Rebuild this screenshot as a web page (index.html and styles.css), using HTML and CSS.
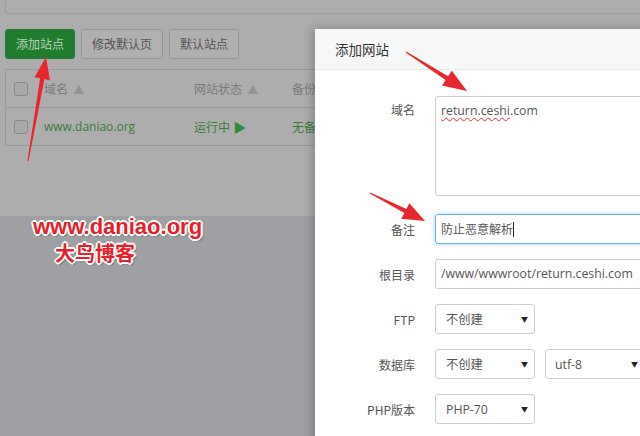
FILE: index.html
```html
<!DOCTYPE html>
<html lang="zh-CN">
<head>
<meta charset="utf-8">
<title>添加网站</title>
<link rel="stylesheet" href="styles.css">
</head>
<body>
<div class="page">
  <div class="top">
    <div class="card-top"></div>
    <div class="toolbar">
      <button class="btn btn-green">添加站点</button>
      <button class="btn">修改默认页</button>
      <button class="btn">默认站点</button>
    </div>
    <table class="sites">
      <tr class="head">
        <td class="c-check"><span class="check"></span></td>
        <td class="c-name">域名 <span class="sort">▲</span></td>
        <td class="c-status">网站状态 <span class="sort">▲</span></td>
        <td class="c-backup">备份</td>
      </tr>
      <tr>
        <td class="c-check"><span class="check"></span></td>
        <td class="c-name link">www.daniao.org</td>
        <td class="c-status link">运行中 <span class="play">▶</span></td>
        <td class="c-backup link">无备份</td>
      </tr>
    </table>
  </div>
  <div class="bottom"></div>
</div>

<div class="modal">
  <div class="modal-head">添加网站</div>
  <div class="form">
    <label class="lbl lbl-top">域名</label>
    <div class="field area"><span class="typo">return.ceshi</span>.com</div>

    <label class="lbl">备注</label>
    <div class="field focus">防止恶意解析<span class="caret"></span></div>

    <label class="lbl">根目录</label>
    <div class="field">/www/wwwroot/return.ceshi.com</div>

    <label class="lbl">FTP</label>
    <div class="selects"><div class="select">不创建<span class="arr">▼</span></div></div>

    <label class="lbl">数据库</label>
    <div class="selects">
      <div class="select">不创建<span class="arr">▼</span></div>
      <div class="select select-utf">utf-8<span class="arr">▼</span></div>
    </div>

    <label class="lbl">PHP版本</label>
    <div class="selects"><div class="select">PHP-70<span class="arr">▼</span></div></div>
  </div>
</div>

<div class="mark">
  <div class="mark-url">www.daniao.org</div>
  <div class="mark-cn">大鸟博客</div>
</div>

<svg class="arrows" width="640" height="436" viewBox="0 0 640 436">
  <polygon points="46,57 50,80.5 44.4,79 28.6,161 27.4,161 40.1,78.3 34.5,77.2" fill="#e8262b"/>
  <polygon points="467,91 442,85.5 445.6,79.9 405.7,52.4 406.3,51.6 448,76.3 451.8,70.8" fill="#e8262b"/>
  <polygon points="425,221 401.3,218.8 404.4,212.9 369.8,193.4 370.2,192.6 406.4,209.1 409.3,203.3" fill="#e8262b"/>
</svg>
</body>
</html>
```
FILE: styles.css
```css
html, body {
  margin: 0;
  padding: 0;
  width: 640px;
  height: 436px;
  overflow: hidden;
  font-family: "Open Sans", "Noto Sans CJK SC", sans-serif;
}

.page {
  display: flex;
  flex-direction: column;
  height: 436px;
}

.top {
  height: 216px;
  background: #adadad;
  padding-left: 5px;
  box-sizing: border-box;
}

.card-top {
  height: 14px;
  box-sizing: border-box;
  border-left: 1px solid #9c9c9c;
  border-bottom: 1px solid #9c9c9c;
  border-bottom-left-radius: 4px;
}

.toolbar {
  display: flex;
  gap: 6px;
  margin-top: 15px;
}

.btn {
  height: 30px;
  padding: 0 10px;
  border: 1px solid #949494;
  border-radius: 3px;
  background: #b0b0b0;
  color: #545454;
  font-family: "Noto Sans CJK SC", sans-serif;
  font-size: 12px;
  line-height: 28px;
}

.btn-green {
  background: #207d30;
  border-color: #207d30;
  color: #bcd0bd;
}

.sites {
  margin-top: 10px;
  width: 640px;
  border-collapse: collapse;
  border: 1px solid #9b9b9b;
  font-size: 12px;
  color: #7a7a7a;
}

.sites td {
  height: 37px;
  padding: 0;
  border-bottom: 1px solid #9b9b9b;
  vertical-align: middle;
}

.c-check {
  width: 30px;
  padding-left: 8px !important;
}

.c-name { width: 150px; }
.c-status { width: 98px; }

.check {
  display: block;
  width: 12px;
  height: 12px;
  border: 1px solid #8a8a8a;
  border-radius: 3px;
  background: #a9a9a9;
}

.sort {
  color: #939393;
  font-size: 11px;
  margin-left: 2px;
}

.link {
  color: #3a7a3c;
}

.play {
  color: #2f8a37;
  font-size: 13px;
}

.bottom {
  flex: 1;
  background: #9ea0a3;
}

/* modal */
.modal {
  position: absolute;
  left: 315px;
  top: 29px;
  width: 340px;
  height: 420px;
  background: #fff;
  box-shadow: -2px 0 10px rgba(0, 0, 0, 0.25);
  font-family: "Open Sans", "Noto Sans CJK SC", sans-serif;
}

.modal-head {
  height: 41px;
  box-sizing: border-box;
  padding-left: 20px;
  background: #f8f8f8;
  border-bottom: 1px solid #ececec;
  font-family: "Noto Sans CJK SC", sans-serif;
  font-size: 13.5px;
  line-height: 40px;
  color: #333;
}

.form {
  display: grid;
  grid-template-columns: 100px 1fr;
  column-gap: 20px;
  row-gap: 15px;
  padding-top: 26px;
  align-items: center;
}

.lbl {
  text-align: right;
  font-family: "Noto Sans CJK SC", sans-serif;
  font-size: 12px;
  color: #555;
}

.lbl-top {
  align-self: start;
  padding-top: 5px;
}

.field {
  height: 30px;
  box-sizing: border-box;
  border: 1px solid #cfcfcf;
  border-radius: 3px;
  padding: 0 5px;
  font-size: 12.3px;
  line-height: 28px;
  color: #555;
  white-space: nowrap;
}

.area {
  height: 100px;
  margin-bottom: 3px;
  line-height: 27px;
}

.typo {
  text-decoration: underline wavy #e03030;
  text-decoration-thickness: 1px;
  text-underline-offset: 2px;
}

.focus {
  border-color: #66afe9;
  box-shadow: 0 0 4px rgba(102, 175, 233, 0.6);
  font-family: "Noto Sans CJK SC", sans-serif;
  font-size: 12px;
}

.caret {
  display: inline-block;
  width: 1px;
  height: 15px;
  background: #222;
  vertical-align: -3px;
}

.selects {
  display: flex;
  gap: 10px;
}

.select {
  width: 100px;
  height: 30px;
  box-sizing: border-box;
  border: 1px solid #cfcfcf;
  border-radius: 3px;
  padding: 0 6px 0 10px;
  display: flex;
  justify-content: space-between;
  align-items: center;
  font-size: 12.3px;
  color: #555;
}

.select-utf {
  padding-left: 9px;
}

.arr {
  font-size: 7px;
  color: #222;
}

/* watermark */
.mark {
  position: absolute;
  left: 33px;
  top: 213px;
  font-family: "Liberation Sans", "Noto Sans CJK SC", sans-serif;
  font-weight: bold;
  color: #e5202a;
  text-shadow:
    1px 1px 0 #fff, -1px -1px 0 #fff, 1px -1px 0 #fff, -1px 1px 0 #fff,
    2px 0 0 #fff, -2px 0 0 #fff, 0 2px 0 #fff, 0 -2px 0 #fff,
    2px 2px 2px rgba(0, 0, 0, 0.35);
}

.mark-url {
  font-size: 22px;
  line-height: 28px;
}

.mark-cn {
  font-family: "Noto Sans CJK SC", sans-serif;
  font-size: 20px;
  line-height: 24px;
  padding-left: 22px;
}

.arrows {
  position: absolute;
  left: 0;
  top: 0;
  pointer-events: none;
}
```
